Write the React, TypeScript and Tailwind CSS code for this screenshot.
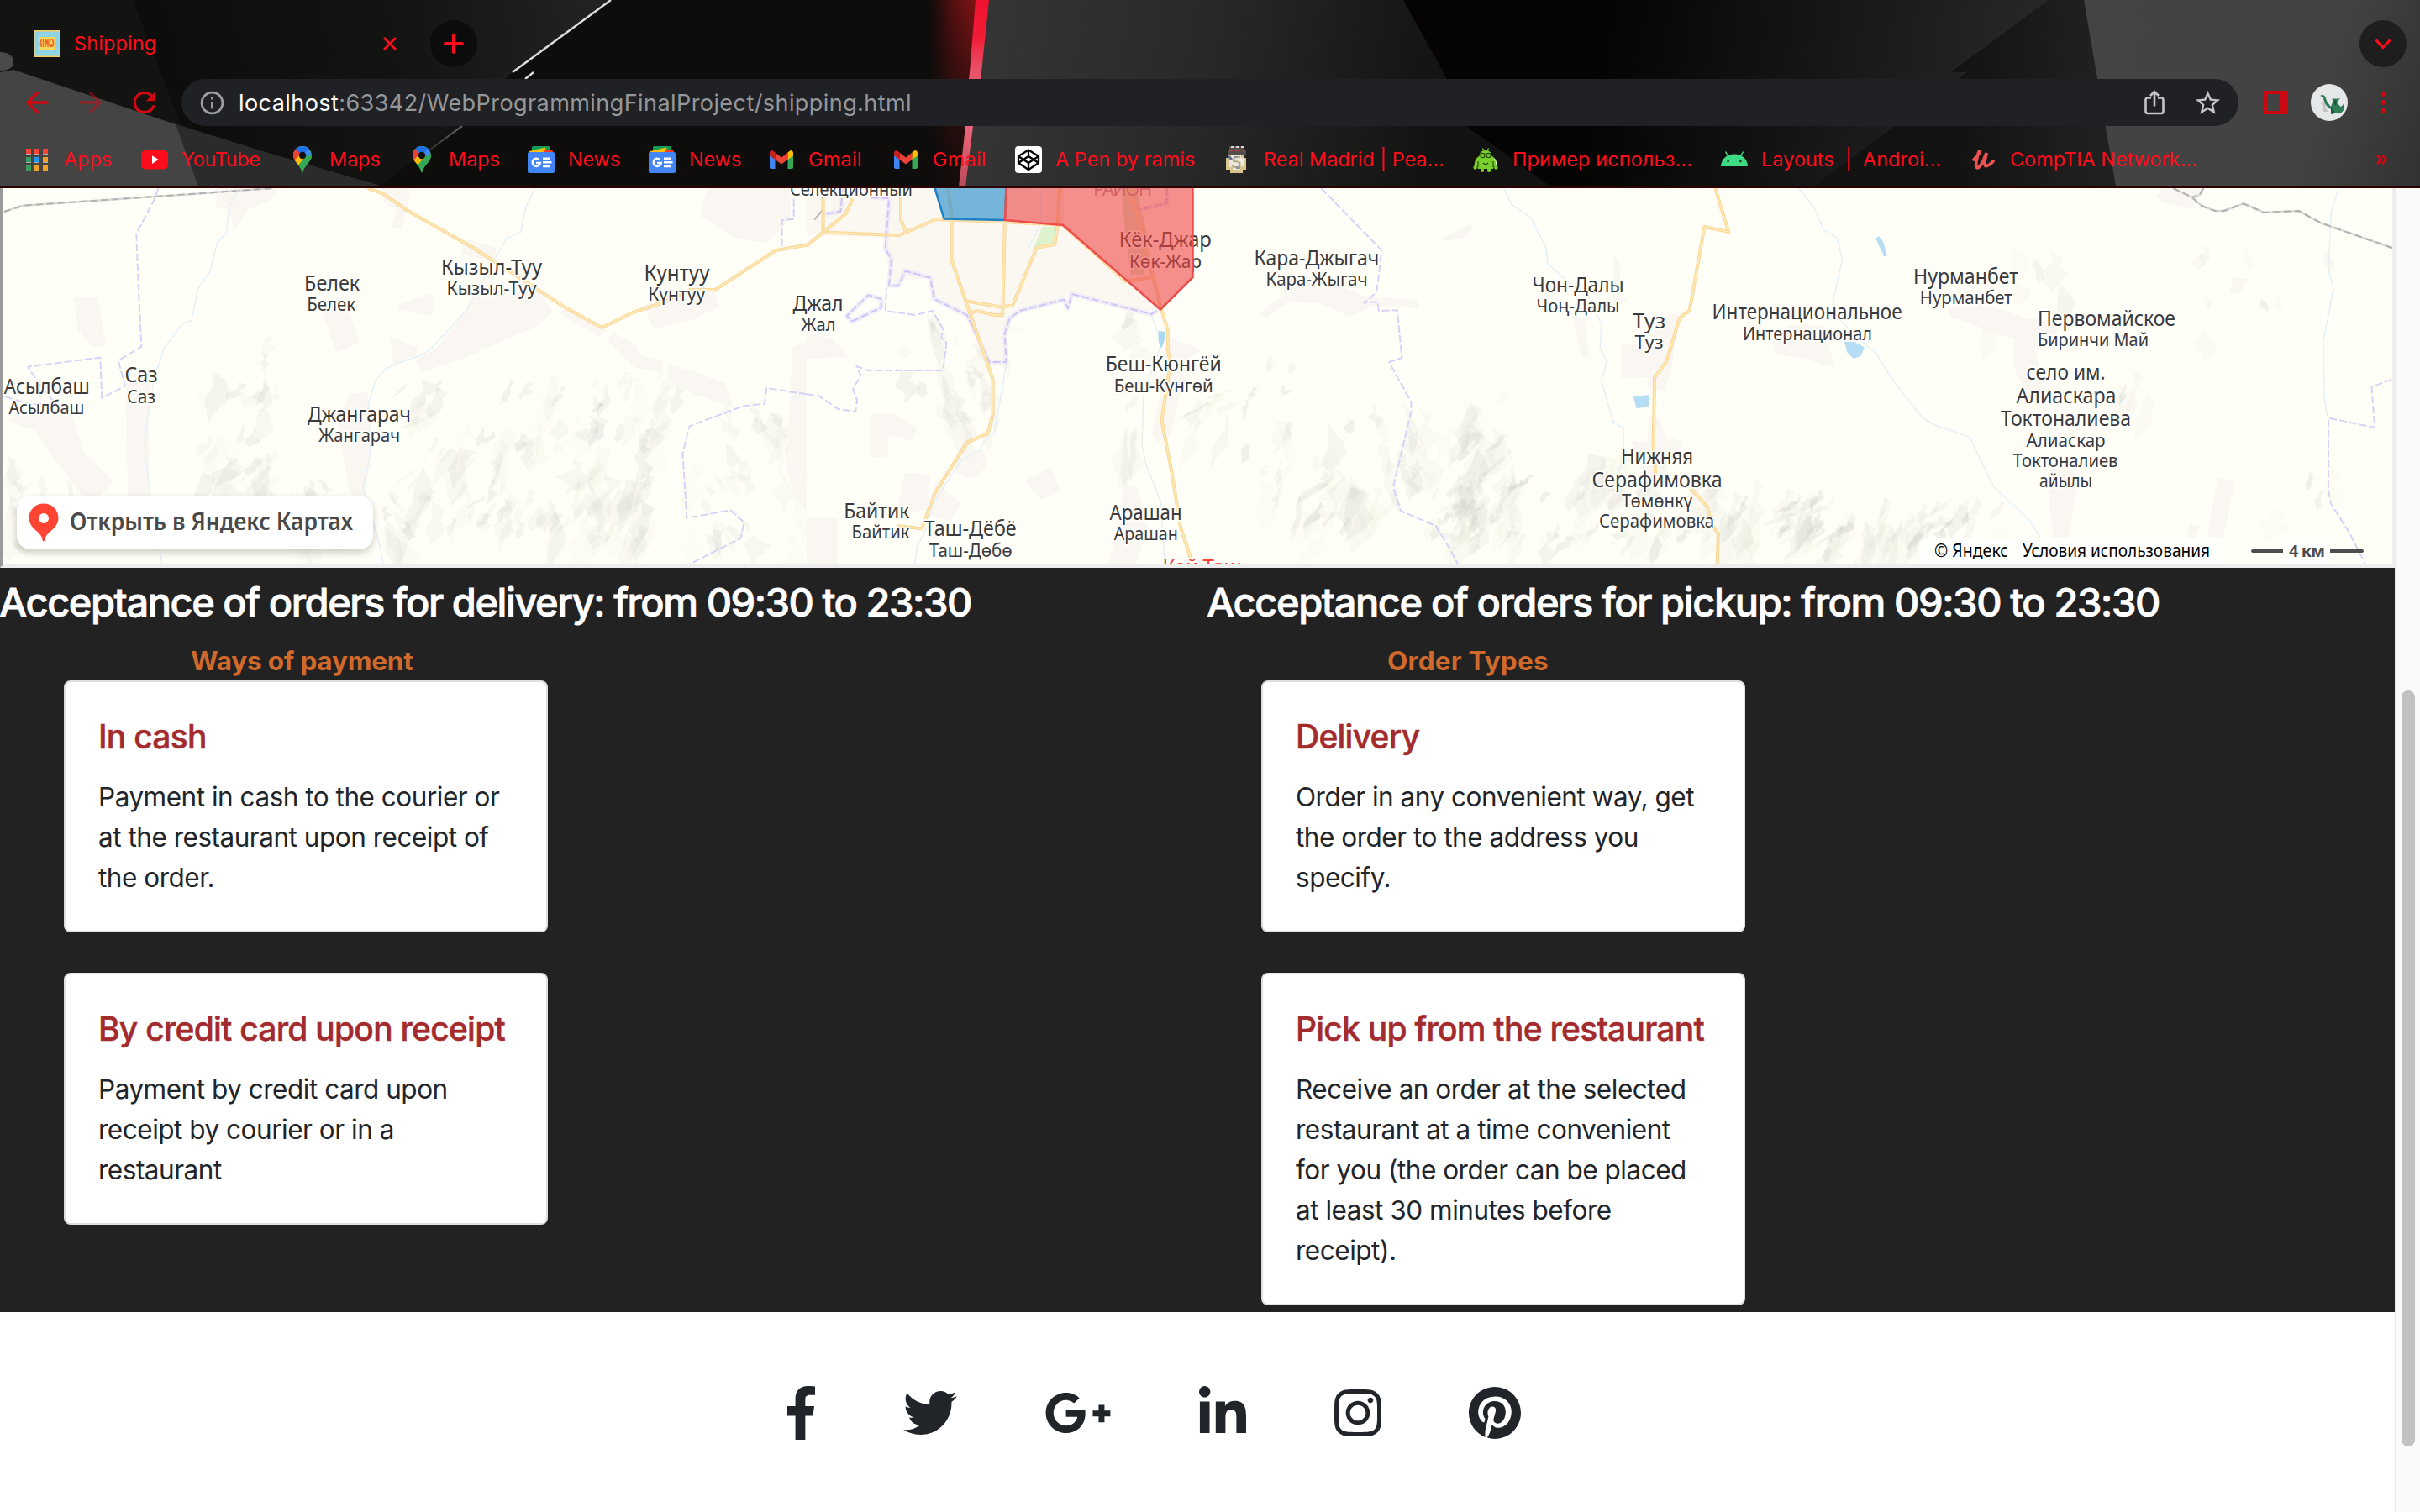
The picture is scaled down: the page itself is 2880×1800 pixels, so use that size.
import type { ReactNode } from "react";
import { FaGooglePlusG, FaInstagram, FaPinterest, FaTwitter } from "react-icons/fa";
import { MdArrowBack, MdArrowForward, MdInfoOutline, MdRefresh, MdStarBorder } from "react-icons/md";

/* ---------- browser theme artwork ---------- */

function ThemeArt() {
  return (
    <svg className="absolute inset-0" width="2880" height="222" viewBox="0 0 2880 222" aria-hidden>
      <defs>
        <linearGradient id="facetA" x1="160" y1="100" x2="700" y2="0" gradientUnits="userSpaceOnUse">
          <stop offset="0" stopColor="#0c0c0b" />
          <stop offset="0.6" stopColor="#141413" />
          <stop offset="1" stopColor="#222222" />
        </linearGradient>
        <linearGradient id="facetB" x1="1160" y1="0" x2="1730" y2="100" gradientUnits="userSpaceOnUse">
          <stop offset="0" stopColor="#363636" />
          <stop offset="0.5" stopColor="#282828" />
          <stop offset="1" stopColor="#121211" />
        </linearGradient>
        <linearGradient id="facetC" x1="1900" y1="40" x2="2420" y2="120" gradientUnits="userSpaceOnUse">
          <stop offset="0" stopColor="#050403" />
          <stop offset="0.5" stopColor="#161616" />
          <stop offset="1" stopColor="#282828" />
        </linearGradient>
        <linearGradient id="facetD" x1="2320" y1="0" x2="2500" y2="0" gradientUnits="userSpaceOnUse">
          <stop offset="0" stopColor="#121212" />
          <stop offset="1" stopColor="#212121" />
        </linearGradient>
        <linearGradient id="facetE" x1="2490" y1="100" x2="2880" y2="222" gradientUnits="userSpaceOnUse">
          <stop offset="0" stopColor="#444444" />
          <stop offset="0.65" stopColor="#424242" />
          <stop offset="1" stopColor="#323232" />
        </linearGradient>
        <linearGradient id="glow" x1="1105" y1="0" x2="1165" y2="0" gradientUnits="userSpaceOnUse">
          <stop offset="0" stopColor="#5a0a0a" stopOpacity="0" />
          <stop offset="0.5" stopColor="#6b1112" stopOpacity="0.8" />
          <stop offset="1" stopColor="#8a1416" />
        </linearGradient>
        <linearGradient id="glowFade" x1="0" y1="0" x2="0" y2="222" gradientUnits="userSpaceOnUse">
          <stop offset="0" stopColor="#fff" />
          <stop offset="0.45" stopColor="#777" />
          <stop offset="1" stopColor="#111" />
        </linearGradient>
        <mask id="glowMask">
          <rect x="1080" width="120" height="222" fill="url(#glowFade)" />
        </mask>
        <linearGradient id="laser" x1="0" y1="0" x2="0" y2="222" gradientUnits="userSpaceOnUse">
          <stop offset="0" stopColor="#f0122e" />
          <stop offset="0.2" stopColor="#f21c38" />
          <stop offset="0.38" stopColor="#e8546a" />
          <stop offset="0.7" stopColor="#ea6478" />
          <stop offset="1" stopColor="#bd4a5a" />
        </linearGradient>
        <linearGradient id="beam" x1="550" y1="150" x2="510" y2="180" gradientUnits="userSpaceOnUse">
          <stop offset="0" stopColor="#6e6e6c" />
          <stop offset="1" stopColor="#2a2a2a" />
        </linearGradient>
      </defs>
      <rect width="2880" height="222" fill="#131312" />
      {/* left slabs */}
      <path d="M158 0H727L610 86L455 222H390L215 148Z" fill="url(#facetA)" />
      <path d="M0 62C8 62 16 66 16 72C16 80 12 84 0 84Z" fill="#4a4a4a" />
      <path d="M0 86L16 83L209 148L305 178L455 222H0Z" fill="#444444" />
      <path d="M209 148L305 178L455 222H236Z" fill="#2b2b2b" />
      <path d="M727 0H1170L1146 222H450L550 150L610 86Z" fill="#0e0d0c" />
      <path d="M727 0L610 86" stroke="#dcdcda" strokeWidth="2.5" />
      <path d="M635 86L625 94" stroke="#dcdcda" strokeWidth="2.5" />
      <path d="M550 150L512 178" stroke="url(#beam)" strokeWidth="2" />
      {/* centre slab and laser line */}
      <path d="M1168 0H1670L1718 86L1745 150L1845 222H1146Z" fill="url(#facetB)" />
      <path d="M1105 0H1168L1146 222H1105Z" fill="url(#glow)" mask="url(#glowMask)" />
      <path d="M1161 0H1177L1168 86H1154Z" fill="url(#laser)" />
      <path d="M1154 86H1168L1167 94H1153Z" fill="url(#laser)" />
      <path d="M1149 150H1158L1149 222H1141Z" fill="url(#laser)" />
      {/* right slabs */}
      <path d="M1670 0H1925L1905 222H1845L1745 150L1718 86Z" fill="#050403" />
      <path d="M1910 0H2438L2322 86H2341L2255 150L2158 222H1880Z" fill="url(#facetC)" />
      <path d="M2438 0H2480L2518 222H2158L2255 150L2341 86H2322Z" fill="url(#facetD)" />
      <path d="M2480 0H2880V222H2518Z" fill="url(#facetE)" />
    </svg>
  );
}

/* ---------- bookmark icons ---------- */

const APP_COLORS = ["#f44336", "#f44336", "#f44336", "#3c9a5f", "#2196f3", "#f0a024", "#3c9a5f", "#f0a024", "#f0a024"];

function AppsIcon() {
  return (
    <div className="ml-[3px] grid grid-cols-3 gap-x-1 gap-y-[3px]">
      {APP_COLORS.map((c, i) => (
        <span key={i} className="block h-[7px] w-1.5 border-b border-[#b0b0b0]" style={{ backgroundColor: c }} />
      ))}
    </div>
  );
}

function YouTubeIcon() {
  return (
    <svg width="32" height="32" viewBox="0 0 32 32">
      <rect y="5" width="32" height="22.5" rx="5" fill="#ff0d1c" />
      <path d="M13 11.2L20.6 16.1L13 21Z" fill="#fff" />
    </svg>
  );
}

function MapsIcon() {
  return (
    <svg width="32" height="32" viewBox="0 0 32 32">
      <defs>
        <clipPath id="pinClip">
          <path d="M16 0C10 0 5 4.9 5 11C5 18.5 13.6 22 16 32C18.400 22 27 18.500 27 11C27 4.900 22 0 16 0Z" />
        </clipPath>
      </defs>
      <g clipPath="url(#pinClip)">
        <rect width="32" height="32" fill="#34a853" />
        <path d="M3 -1H30L12 14L3 8Z" fill="#4285f4" />
        <path d="M2 3.500L9 3L16 11L8 20L2 18Z" fill="#ea4335" />
        <path d="M6 17L17 6L20 14L10 24Z" fill="#fbbc04" />
        <path d="M6 2L16 0L24 3L16 11L8.500 3.800Z" fill="#1a73e8" />
        <path d="M24 3L27 11L20 14L16 11Z" fill="#4285f4" />
        <path d="M30 8L20 12L9 25L16 33L30 20Z" fill="#34a853" />
      </g>
      <circle cx="16" cy="11" r="4.200" fill="#101010" />
    </svg>
  );
}

function NewsIcon() {
  return (
    <svg width="32" height="32" viewBox="0 0 32 32">
      <rect x="5" width="22" height="8" rx="1.500" fill="#0f9d58" />
      <path d="M2 6L21 1.500L23 9H2Z" fill="#ffc107" />
      <path d="M20 3.500L30 5.500L29 10H19Z" fill="#ff3d22" />
      <rect y="7" width="32" height="25" rx="2" fill="#4285f4" />
      <path d="M13.500 16A4.600 4.600 0 1 0 14.800 20H10" fill="none" stroke="#fff" strokeWidth="2.500" />
      <path d="M18 14.700H27M18 19.300H28.500M18 23.900H27" stroke="#fff" strokeWidth="2.500" />
    </svg>
  );
}

function GmailIcon() {
  return (
    <svg width="32" height="32" viewBox="0 0 32 32">
      <path d="M2 10V25Q2 27 4 27H8.500V14Z" fill="#4285f4" />
      <path d="M30 10V25Q30 27 28 27H23.500V14Z" fill="#34a853" />
      <path d="M8.500 7.500V16L16 21.500L23.500 16V7.500L16 13.500Z" fill="#ea4335" />
      <path d="M2 8.500Q2 5 5 5Q6 5 8.500 7.500V16L2 11.500Z" fill="#c5221f" />
      <path d="M30 8.500Q30 5 27 5Q26 5 23.500 7.500V16L30 11.500Z" fill="#fbbc04" />
    </svg>
  );
}

function PenIcon() {
  return (
    <svg width="32" height="32" viewBox="0 0 32 32">
      <rect width="32" height="32" rx="4" fill="#fff" />
      <g fill="none" stroke="#000" strokeWidth="2.300" strokeLinejoin="round">
        <path d="M16 4.500L28 12V20L16 28L4 20V12Z" />
        <path d="M4 12L16 20L28 12M4 20L16 12L28 20M16 4.500V12M16 20V28" />
      </g>
    </svg>
  );
}

function CrestIcon() {
  return (
    <svg width="32" height="32" viewBox="0 0 32 32">
      <path d="M7 0H25V4H27V10H5V4H7Z" fill="#55504e" />
      <path d="M9 0H12V2H9ZM15 0H18V2H15ZM21 0H24V2H21Z" fill="#d8d8d8" />
      <path d="M8 4H11V6H8ZM14 4H18V6H14ZM21 4H24V6H21Z" fill="#c03a34" />
      <path d="M5 10H25V14H27V28H23V32H8V28H3V14H5Z" fill="#d9c48e" />
      <path d="M9 11H21V14H24V24H20V28H11V25H7V15H9Z" fill="#ece8dc" />
      <path d="M6 12L10 16" stroke="#5d6c92" strokeWidth="3" fill="none" />
      <path d="M20 13Q11 12 12 18Q22 18 19 24Q14 27 10 23" stroke="#b3a67e" strokeWidth="2" fill="none" />
      <path d="M12 12H17V14H12ZM15 24H20V27H15Z" fill="#8f939c" />
    </svg>
  );
}

function DroidMascotIcon() {
  return (
    <svg width="32" height="32" viewBox="0 0 32 32">
      <g fill="#79d02b">
        <path d="M16 5C11 5 8.500 8.500 8.500 12C4 14 3 18 2.500 24H6L7 27H25L26 24H29.500C29 18 28 14 23.500 12C23.500 8.500 21 5 16 5Z" />
        <circle cx="3.600" cy="25.500" r="2.200" />
        <circle cx="28.400" cy="25.500" r="2.200" />
        <rect x="10" y="26" width="4" height="5" rx="2" />
        <rect x="18" y="26" width="4" height="5" rx="2" />
      </g>
      <path d="M12.500 2.500L14 6M19.500 2.500L18 6" stroke="#79d02b" strokeWidth="1.300" />
      <g fill="none" stroke="#234d0b" strokeWidth="1.200">
        <circle cx="12.500" cy="11" r="2.600" />
        <circle cx="19.500" cy="11" r="2.600" />
        <path d="M13 20Q16 23.500 19 20M7 18V25M25 18V25" />
      </g>
      <path d="M26.500 15Q29 18 29 23" stroke="#e8f3de" fill="none" />
    </svg>
  );
}

function AndroidIcon() {
  return (
    <svg width="32" height="32" viewBox="0 0 32 32">
      <path d="M0 24C0.500 15 7 9.500 16 9.500S31.500 15 32 24Z" fill="#3ddc84" />
      <path d="M8.500 12L5.500 6.500M23.500 12L26.500 6.500" stroke="#3ddc84" strokeWidth="1.500" />
      <circle cx="8.600" cy="18" r="1.300" fill="#14301f" />
      <circle cx="23.400" cy="18" r="1.300" fill="#14301f" />
    </svg>
  );
}

function UdemyIcon() {
  return (
    <svg width="32" height="32" viewBox="0 0 32 32">
      <path
        d="M5 16Q11 10 12 7Q12 4.500 10.500 8Q6.500 21 8 25Q11 28 16.500 17L19.500 9.500M20 9.500Q16 23 19.500 23.500Q23 23.500 28 18"
        fill="none"
        stroke="#ec5252"
        strokeWidth="3.800"
        strokeLinecap="round"
        strokeLinejoin="round"
      />
    </svg>
  );
}

const BOOKMARKS: { label: string; w: string; tracking: string; icon: ReactNode }[] = [
  { label: "Apps", w: "w-[140px]", tracking: "tracking-[-0.1px]", icon: <AppsIcon /> },
  { label: "YouTube", w: "w-[176px]", tracking: "tracking-[-0.4px]", icon: <YouTubeIcon /> },
  { label: "Maps", w: "w-[142px]", tracking: "tracking-[-0.1px]", icon: <MapsIcon /> },
  { label: "Maps", w: "w-[142px]", tracking: "tracking-[-0.1px]", icon: <MapsIcon /> },
  { label: "News", w: "w-[144px]", tracking: "tracking-[-0.1px]", icon: <NewsIcon /> },
  { label: "News", w: "w-[142px]", tracking: "tracking-[-0.1px]", icon: <NewsIcon /> },
  { label: "Gmail", w: "w-[148px]", tracking: "tracking-[0.2px]", icon: <GmailIcon /> },
  { label: "Gmail", w: "w-[146px]", tracking: "tracking-[0.2px]", icon: <GmailIcon /> },
  { label: "A Pen by ramis", w: "w-[248px]", tracking: "tracking-[0px]", icon: <PenIcon /> },
  { label: "Real Madrid | Pea...", w: "w-[296px]", tracking: "tracking-[-0.05px]", icon: <CrestIcon /> },
  { label: "Пример использ...", w: "w-[296px]", tracking: "tracking-[0.1px]", icon: <DroidMascotIcon /> },
  { label: "Layouts  |  Androi...", w: "w-[296px]", tracking: "tracking-[0px]", icon: <AndroidIcon /> },
  { label: "CompTIA Network...", w: "w-[484px]", tracking: "tracking-[-0.05px]", icon: <UdemyIcon /> },
];

/* ---------- browser chrome ---------- */

function Favicon() {
  return (
    <svg width="32" height="32" viewBox="0 0 32 32">
      <rect width="32" height="32" fill="#f6cf62" />
      <rect x="1.500" y="1.500" width="29" height="29" fill="#8fd3e4" />
      <rect x="7" y="8" width="18" height="15.500" fill="#fbd65c" />
      <g fill="none" stroke="#ee6a2c" strokeWidth="1.600">
        <path d="M9.500 11Q7.500 15.500 9.500 20M11.500 11V20M14 20V11L15.500 15L17 11V20M21 12Q19 10.500 19 15.500T21 19V16M22.500 11Q24.500 15.500 22.500 20" />
      </g>
    </svg>
  );
}

function BrowserChrome() {
  return (
    <header className="relative h-[224px] w-full shrink-0 overflow-hidden border-b-2 border-[#2b0000] bg-[#121211]">
      <ThemeArt />
      <div className="relative flex h-[222px] flex-col">
        <div className="flex h-[86px] items-end justify-between pr-4">
          <div className="flex items-center">
            <div className="ml-4 flex h-[68px] w-[482px] items-center rounded-t-2xl pr-[26px] pl-6">
              <Favicon />
              <span className="ml-4 text-[23.5px] tracking-[0.1px] text-[#ff0d1c]">Shipping</span>
              <svg className="ml-auto" width="16" height="16" viewBox="0 0 16 16" stroke="#ff0d1c" strokeWidth="2.800">
                <path d="M1 1L15 15M15 1L1 15" />
              </svg>
            </div>
            <div className="ml-[14px] flex size-14 items-center justify-center rounded-full bg-[#0c0c0c]">
              <svg width="24" height="24" viewBox="0 0 24 24" stroke="#ff0d1c" strokeWidth="4" strokeLinecap="round">
                <path d="M12 2V22M2 12H22" />
              </svg>
            </div>
          </div>
          <div className="mb-1.5 flex size-14 items-center justify-center rounded-full bg-[#1e1e1e]">
            <svg width="20" height="14" viewBox="0 0 20 14" fill="none" stroke="#ff0d1c" strokeWidth="3.200">
              <path d="M1.500 2.500L10 11.500L18.500 2.500" />
            </svg>
          </div>
        </div>

        <div className="flex h-[72px] items-center">
          <div className="flex w-[216px] items-center text-[#cf0812]">
            <MdArrowBack className="ml-6 size-10" />
            <MdArrowForward className="ml-6 size-10 opacity-50" />
            <MdRefresh className="ml-6 size-10" />
          </div>
          <div className="flex h-14 w-[2448px] items-center rounded-full bg-[#202124] pl-5">
            <MdInfoOutline className="size-[33px] text-[#9aa0a6]" />
            <div className="ml-[15px] pt-0.5 text-[27px] tracking-[0.43px] text-[#95979a]">
              <span className="text-white">localhost</span>:63342/WebProgrammingFinalProject/shipping.html
            </div>
            <svg className="ml-auto" width="24" height="30" viewBox="0 0 24 30" fill="none" stroke="#c4c5c7" strokeWidth="2.600">
              <path d="M8 9.500H4Q1.500 9.500 1.500 12V25.500Q1.500 28 4 28H20Q22.500 28 22.500 25.500V12Q22.500 9.500 20 9.500H16" />
              <path d="M12 19.500V2.500M7 7L12 2L17 7" />
            </svg>
            <MdStarBorder className="mr-[19px] ml-[34px] size-[35px] text-[#c4c5c7]" />
          </div>
          <div className="ml-[30px] h-7 w-7 border-4 border-r-[10px] border-[#cc0812]" />
          <div className="ml-7 flex size-11 items-center justify-center rounded-full bg-[#e6e7e8]">
            <svg width="44" height="44" viewBox="0 0 44 44">
              <path d="M12 23Q18 20 18 29L21 33H14Q16 27 12 23Z" fill="#c2c5c6" />
              <path d="M11 14Q16 11 18 17Q19 22 22 24.500L24 27L25.500 23Q26.500 19 25.500 17.500H35.500Q31 20 31.500 23Q34 25 35.500 27Q38.500 26 39.500 22Q41 31 36.500 34Q33 36.500 30 34L25 36.500L27 31L22 29Q16 24 15.500 19Q15 15 11 14Z" fill="#2f7d57" />
              <path d="M27 18.500L31 20L30 26L28 24ZM24 26L29 34L24 36Z" fill="#1d5a3c" />
            </svg>
          </div>
          <div className="ml-[39px] flex flex-col gap-1">
            <span className="size-1.5 rounded-full bg-[#cc0812]" />
            <span className="size-1.5 rounded-full bg-[#cc0812]" />
            <span className="size-1.5 rounded-full bg-[#cc0812]" />
          </div>
        </div>

        <div className="flex h-16 items-center pl-7">
          {BOOKMARKS.map((b, i) => (
            <div key={i} className={`flex shrink-0 items-center ${b.w}`}>
              <span className="flex w-8 shrink-0">{b.icon}</span>
              <span className={`ml-4 text-[23.5px] whitespace-pre text-[#ff0d1c] ${b.tracking}`}>{b.label}</span>
            </div>
          ))}
          <svg width="14" height="14" viewBox="0 0 14 14" fill="none" stroke="#cf0812" strokeWidth="2.600">
            <path d="M1 2L6 7L1 12M7 2L12 7L7 12" />
          </svg>
        </div>
      </div>
    </header>
  );
}

/* ---------- map ---------- */

type Label = [text: string, x: number, y: number, width: number, major: boolean];

const LABELS: Label[] = [
  ["Белек", 395.1, 345.7, 66, true],
  ["Белек", 394.2, 370, 58, false],
  ["Кызыл-Туу", 585, 326.7, 120, true],
  ["Кызыл-Туу", 585, 350.7, 107, false],
  ["Кунтуу", 805.5, 334, 78, true],
  ["Күнтуу", 805.2, 358, 68, false],
  ["Асылбаш", 55.7, 469, 102, true],
  ["Асылбаш", 55.4, 493, 90, false],
  ["Саз", 168, 455, 39, true],
  ["Саз", 168, 480, 34, false],
  ["Джангарач", 427.5, 502, 123, true],
  ["Жангарач", 427.7, 526, 97, false],
  ["Селекционный", 1013, 232.7, 146, false],
  ["Кёк-Джар", 1386.8, 294, 110, true],
  ["Көк-Жар", 1387, 319, 86, false],
  ["Беш-Кюнгёй", 1384.7, 442, 138, true],
  ["Беш-Күнгөй", 1384.7, 466.7, 118, false],
  ["Кара-Джыгач", 1566.9, 316, 149, true],
  ["Кара-Жыгач", 1567, 340, 121, false],
  ["Джал", 973.5, 369.7, 60, true],
  ["Жал", 974, 394, 41, false],
  ["Байтик", 1043.3, 616.7, 78, true],
  ["Байтик", 1048, 641, 69, false],
  ["Таш-Дёбё", 1154.7, 638, 110, true],
  ["Таш-Дөбө", 1155.3, 662.7, 99, false],
  ["Арашан", 1363.6, 619, 86, true],
  ["Арашан", 1363.8, 643, 76, false],
  ["Чон-Далы", 1878, 347.7, 109, true],
  ["Чоң-Далы", 1878, 372, 99, false],
  ["Туз", 1962.6, 390.7, 39, true],
  ["Туз", 1962.6, 415, 34, false],
  ["Интернациональное", 2150.6, 380, 226, true],
  ["Интернационал", 2151, 405, 154, false],
  ["Нурманбет", 2339.5, 337.7, 125, true],
  ["Нурманбет", 2339.8, 362, 110, false],
  ["Первомайское", 2507, 387.7, 164, true],
  ["Биринчи Май", 2491, 412, 132, false],
  ["село им.", 2458.6, 452, 94, true],
  ["Алиаскара", 2459, 480, 119, true],
  ["Токтоналиева", 2458.6, 507, 155, true],
  ["Алиаскар", 2458.6, 532, 94, false],
  ["Токтоналиев", 2458, 556, 125, false],
  ["айылы", 2458.6, 580, 63, false],
  ["Нижняя", 1972, 552, 86, true],
  ["Серафимовка", 1972, 580, 155, true],
  ["Төмөнкү", 1972, 604, 84, false],
  ["Серафимовка", 1971.5, 628, 137, false],
];

/* Relief bands: left, top, right, bottom, number of ridges, lean of the slope */
const RELIEF: [number, number, number, number, number, number][] = [
  [4, 540, 90, 640, 14, 10],
  [230, 440, 330, 590, 22, -12],
  [310, 380, 330, 500, 6, -4],
  [330, 560, 480, 640, 20, 12],
  [480, 450, 590, 620, 36, -14],
  [590, 440, 720, 620, 44, -8],
  [700, 440, 830, 640, 40, -8],
  [830, 470, 960, 640, 30, 12],
  [1060, 370, 1200, 500, 20, 10],
  [1120, 430, 1180, 510, 14, 8],
  [1335, 370, 1360, 520, 8, -6],
  [1410, 460, 1470, 500, 8, -26],
  [1480, 420, 1540, 580, 18, -4],
  [1540, 560, 1620, 620, 14, -20],
  [1560, 460, 1700, 600, 26, 6],
  [1720, 460, 1800, 600, 32, -14],
  [1700, 560, 1900, 640, 50, -14],
  [1880, 520, 1990, 640, 22, -10],
  [2000, 560, 2110, 640, 26, -8],
  [2120, 580, 2200, 640, 36, -20],
  [2200, 590, 2290, 640, 22, -10],
  [2290, 590, 2380, 630, 14, -14],
  [2290, 290, 2460, 380, 8, 6],
  [2590, 290, 2800, 380, 8, 4],
  [2520, 420, 2560, 470, 6, -12],
  [2680, 550, 2840, 620, 4, -4],
];

function seeded(seed: number) {
  let s = seed;
  return () => {
    s = (s * 1664525 + 1013904223) % 4294967296;
    return s / 4294967296;
  };
}

function buildRelief() {
  const rnd = seeded(71);
  const out: { d: string; fill: string; opacity: number }[] = [];
  for (const [x0, y0, x1, y1, n, lean] of RELIEF) {
    for (let i = 0; i < n; i++) {
      const x = x0 + rnd() * (x1 - x0);
      const y = y0 + rnd() * (y1 - y0);
      const big = rnd() > 0.55;
      const h = (big ? 34 : 14) + rnd() * (big ? 44 : 20);
      const w = (big ? 12 : 6) + rnd() * (big ? 18 : 9);
      const l = lean * (0.2 + rnd() * 1.3);
      const j = () => (rnd() - 0.5) * w * 0.7;
      out.push({
        d: `M${x} ${y}L${x + w * 0.5 + j()} ${y + h * 0.12}L${x + w * 0.5 + l * 0.3 + j()} ${y + h * 0.35}L${x + w * 0.8 + l * 0.6 + j()} ${y + h * 0.55}L${x + w * 0.4 + l + j()} ${y + h * 0.8}L${x + l} ${y + h}L${x - w * 0.1 + l * 0.8 + j()} ${y + h * 0.75}L${x - w * 0.3 + l * 0.5 + j()} ${y + h * 0.5}L${x + l * 0.2 + j()} ${y + h * 0.28}Z`,
        fill: rnd() > 0.45 ? "#8c9090" : "#c9c8b4",
        opacity: (big ? 0.04 : 0.06) + rnd() * (big ? 0.05 : 0.07),
      });
    }
  }
  return out;
}

const RIDGES = buildRelief();

/* Each third of the map is drawn in its own grid of 1568 x 1410 cells over 960 x 470 px. */
function Tile({ x, children }: { x: number; children: ReactNode }) {
  return <g transform={`translate(${x} 220) scale(0.61225 0.33333)`}>{children}</g>;
}

function Area({ d, fill = "#faf6f2" }: { d: string; fill?: string }) {
  return <path d={d} fill={fill} />;
}

function Line({ d, color, w, dash, opacity }: { d: string; color: string; w: number; dash?: string; opacity?: number }) {
  return (
    <path d={d} fill="none" stroke={color} strokeWidth={w} strokeDasharray={dash} opacity={opacity} strokeLinejoin="round" vectorEffect="non-scaling-stroke" />
  );
}

const Road = ({ d, w = 4 }: { d: string; w?: number }) => (
  <>
    <Line d={d} color="#f9d796" w={w} />
    <Line d={d} color="#ffe7b4" w={w - 2} />
  </>
);
const River = ({ d }: { d: string }) => <Line d={d} color="#e3f1f7" w={1.5} />;
const Border = ({ d }: { d: string }) => <Line d={d} color="#d8d1f8" w={2} dash="9 3" />;
const CityBorder = ({ d }: { d: string }) => (
  <>
    <Line d={d} color="#ece6fa" w={6} opacity={0.6} />
    <Line d={d} color="#cfc6f6" w={2} dash="9 3" />
  </>
);
const Rail = ({ d }: { d: string }) => (
  <>
    <Line d={d} color="#d8d8d6" w={2.5} />
    <Line d={d} color="#b2b2b2" w={2} dash="8 5" />
  </>
);

function MapCanvas() {
  return (
    <svg className="block" width="2843" height="448" viewBox="4 224 2843 448">
      <rect x="4" y="224" width="2843" height="448" fill="#fffff7" />

      <g>
        {RIDGES.map((r, i) => (
          <path key={i} d={r.d} fill={r.fill} opacity={r.opacity} />
        ))}
      </g>

      <Tile x={0}>
        <Area d="M143 400L190 402L206 575L178 578L152 520Z" />
        <Area d="M420 12H545L520 60L480 90L455 165L445 90L420 80Z" />
        <Area d="M742 12H795V60L780 160L760 150L770 90L745 60Z" />
        <Area d="M625 450L680 460L698 565L655 600Z" />
        <Area d="M775 430L830 390L845 410L838 468L775 445Z" />
        <Area d="M757 543L812 580L808 610L765 638Z" />
        <Area d="M905 192L965 225L960 280L895 245Z" />
        <Area d="M925 330L985 390L1050 370L1030 470L990 545L900 620L822 668L805 630L850 580L905 450L920 400Z" />
        <Area d="M960 570L990 470L1045 380L1075 450L1040 510Z" />
        <Area d="M1100 435L1180 520L1165 545L1090 460Z" />
        <Area d="M1190 525L1235 570L1245 610L1290 630L1285 670L1235 655L1180 555Z" />
        <Area d="M1300 645L1350 665L1410 710L1425 795L1360 755L1295 700Z" />
        <Area d="M1250 430L1390 380L1398 435L1350 480L1270 515Z" />
        <Area d="M1375 12H1537V120L1490 210L1430 190L1360 110Z" />
        <Area d="M10 840L90 800L140 830L165 960L220 1060L195 1110H160L110 990L70 880Z" />
        <Area d="M245 700L290 690L290 1110H248Z" />
        <Area d="M680 745L715 742L720 1000L705 1120L680 1100L655 850Z" />
        <Area d="M1540 580L1568 560V1170L1540 1100L1530 1000Z" />
        <Rail d="M8 96L45 74L380 32L530 12" />
        <River d="M462 20L445 80L440 170L422 210L408 310L385 370L372 485L355 495L320 580L300 690L285 850L282 960L292 1110L315 1355" />
        <River d="M1040 12L1022 80L1012 170L985 190L960 270L905 450L880 500L838 585L820 608L770 638L748 660L730 700L716 780L720 960L706 1080L740 1300L745 1355" />
        <Border d="M308 12L298 60L265 175L270 400L275 578L230 628L243 718L198 762L195 617L54 650L75 710L105 775L60 785L8 755" />
        <Border d="M1568 748L1490 726L1486 782L1445 790L1340 862L1327 960L1335 1190L1420 1162L1446 1205L1440 1262L1340 1355" />
        <Border d="M1543 50V122L1520 126V225" />
        <Road d="M715 12L745 32L790 90L920 225L1100 440L1170 510L1230 456L1290 420L1340 375L1391 374L1508 234L1568 215" />
      </Tile>

      <Tile x={960}>
        <Area d="M0 12H500L500 150L620 345L690 445L650 450L515 395L395 470L385 630H350L310 470L250 410L240 330L160 350L155 190L0 180Z" fill="#fbf7f1" />
        <Area d="M458 150H490L486 210L450 220L438 240Z" fill="#dcf3cd" />
        <Area d="M0 530L50 550L82 615L0 620Z" />
        <Area d="M125 820L170 815L215 870L205 915L160 890L158 970L125 975Z" />
        <Area d="M425 1055L475 1010L495 1095L455 1125Z" />
        <Area d="M290 975L345 945L350 1010L320 1050L290 1030Z" />
        <Area d="M190 1030L240 1035L235 1160L175 1175Z" />
        <Area d="M250 1060L300 1140L280 1200L235 1180Z" />
        <Area d="M0 1190H60V1355H0Z" />
        <Area d="M615 1070L640 1075L665 1200L640 1355H585L610 1200Z" />
        <Area d="M700 540L770 590L720 640L735 690L705 900L680 920L670 890L690 720Z" />
        <Area d="M915 350L970 320L1090 400L1185 410L1190 440L1100 435L1055 470L1000 425L940 415L895 475L880 460L930 390Z" />
        <Area d="M1230 195L1290 140L1295 155L1280 190L1240 200Z" />
        <Area d="M1487 465L1510 470L1522 610L1508 620Z" />
        <Area d="M612 12H640L665 200L655 320H630L618 150Z" fill="#d8ecc8" />
        <Line d="M31 12V90L15 125" color="#b9b9b9" w={2} />
        <River d="M455 15V140L430 230" />
        <River d="M388 635L380 730L370 830L365 885L350 905L335 950L300 985L270 1070L245 1140L235 1220L215 1290L210 1355" />
        <River d="M670 465L690 570L655 740L652 930L660 1000L688 1130L690 1180L696 1355" />
        <River d="M1355 12L1370 70L1408 118L1438 230L1440 280L1475 340L1522 400L1545 500L1542 580L1555 630L1545 700L1568 850" />
        <Border d="M1000 12L1117 233L1112 330L1107 385L1083 422L1110 418L1112 450L1148 448L1157 618L1132 633L1175 775V810L1140 1080L1155 1165L1223 1218L1250 1300L1266 1355" />
        <Border d="M0 748L25 755L60 800L95 810L98 770L90 730L105 680L97 648L120 663H265L272 565L262 545L265 515L245 450L210 465L153 450L155 370" />
        <CityBorder d="M125 46L160 48L153 230L165 265L160 360L178 360L192 308L240 332L248 408L312 466L355 633H388L385 530L395 475L415 450L500 410L508 442L515 390L670 462L690 440" />
        <CityBorder d="M88 488L145 438V408L120 394L78 468Z" />
        <CityBorder d="M70 12L66 95L35 105" />
        <CityBorder d="M700 12V65L645 90" />
        <Road d="M32 50V170L180 180L252 123L380 132L498 143L620 345L670 330" />
        <Road d="M90 50L75 105L32 170L0 218" />
        <Road d="M183 45V125L192 165" />
        <Road d="M492 12L488 140" />
        <Road d="M275 12L282 120V270L310 420L362 695V820L352 888L312 920L248 1105L224 1228L175 1218" />
        <Road d="M385 140L381 465H365L330 450L318 460M310 415L375 436L400 432L447 225L482 212L488 145" />
        <Road d="M625 12L637 70L672 320L690 450L702 520V590L707 640L690 840L710 1030L727 1225L746 1330" />
        <Area d="M684 522L697 524L695 560L689 585L684 560Z" fill="#aad9f2" />
      </Tile>

      <Tile x={1920}>
        <Area d="M0 250L12 280L15 400L30 410L0 430Z" />
        <Area d="M15 575L75 560L85 480L125 455L115 640L100 735L65 720L70 690H15Z" />
        <Area d="M35 915L65 920L70 830L90 835L108 920L95 950L85 1080L60 1060Z" />
        <Area d="M315 560L340 500L405 500L432 655L380 625L312 602Z" />
        <Area d="M650 435L735 435L800 475L865 490L860 535L820 570L835 735H800L780 660L778 550L730 525L690 490L652 470Z" />
        <Area d="M1065 12H1148L1125 85L1070 65L1055 40Z" />
        <Area d="M1205 330L1235 335L1215 392L1198 380Z" />
        <Area d="M1175 1045L1208 1065L1185 1262L1155 1255Z" />
        <Area d="M850 1010L905 1030L885 1260H855L845 1100Z" />
        <Area d="M1120 1210L1140 1220L1130 1262H1115Z" />
        <Area d="M510 192L516 183L525 205L532 255H526Z" fill="#b5def5" />
        <Area d="M449 560L470 562L488 580L482 610L467 622L455 600Z" fill="#b5def5" />
        <Area d="M39 757L70 750L69 793L45 798Z" fill="#b5def5" />
        <River d="M360 12L390 80L408 160L435 190L445 265L427 420L445 490L490 570L510 600L540 690L600 830L625 858L692 900L740 1080L775 1140L810 1200L830 1260" />
        <River d="M1410 12L1395 100L1390 300L1400 370L1380 560L1382 760L1388 830" />
        <River d="M0 845L20 870V980L8 1030" />
        <Rail d="M1088 12L1125 45L1143 75L1170 93H1187L1225 67L1265 99L1332 93L1375 136L1515 226" />
        <Rail d="M1147 12L1140 35L1125 45" />
        <Border d="M1513 695L1474 722L1480 867L1390 833V1090L1395 1140L1430 1240L1462 1355" />
        <Road d="M198 12L224 168L177 150L148 450L129 475L103 632L80 688L78 930L82 1030M150 1085L183 1150L190 1210L204 1245L202 1355" />
      </Tile>

      {LABELS.map(([text, x, y, width, major], i) => (
        <text
          key={i}
          x={x}
          y={y}
          textAnchor="middle"
          textLength={width}
          lengthAdjust="spacingAndGlyphs"
          fontSize={major ? 24.5 : 22}
          fill="#3a3a3c"
          stroke="#fffffb"
          strokeWidth="3.5"
          strokeLinejoin="round"
          paintOrder="stroke"
        >
          {text}
        </text>
      ))}
      <text x="1336" y="232.700" textAnchor="middle" textLength="70" fontSize="22" fill="#a89a94">
        РАЙОН
      </text>
      <text x="1430.600" y="683" textAnchor="middle" textLength="94" fontSize="24" fill="#f5413c">
        Кой-Таш
      </text>

      {/* delivery zones */}
      <g strokeWidth="2.500" strokeLinejoin="round">
        <path d="M1112 222L1123.500 260.500L1196 262L1197.500 222Z" fill="#1e88cc" fillOpacity="0.6" stroke="#1f7fc4" />
        <path d="M1197.500 222L1196 262L1265 268L1381 368.500L1419.500 330V222Z" fill="#ed4543" fillOpacity="0.6" stroke="#ee4d4b" />
      </g>
    </svg>
  );
}

function MapPanel() {
  return (
    <section className="relative h-[452px] w-[2850px] overflow-hidden border-t-0 border-r-[3px] border-b-4 border-l-4 border-r-[#ededed] border-b-[#ededed] border-l-[#9a9a9a] font-['Noto_Sans',sans-serif]">
      <MapCanvas />
      <div className="absolute top-[366px] left-4 flex h-16 w-[424px] items-center rounded-2xl bg-white shadow-[0_4px_10px_rgba(0,0,0,0.2)]">
        <svg className="ml-3.5" width="36" height="46" viewBox="0 0 36 46">
          <path d="M18 0.500C8 0.500 0.500 8 0.500 17.500C0.500 22.500 2.600 26.500 6 30C10.500 34.300 15.500 37 16.500 43.500Q16.800 45.500 18 45.500Q19.200 45.500 19.500 43.500C20.500 37 25.500 34.300 30 30C33.400 26.500 35.500 22.500 35.500 17.500C35.500 8 28 0.500 18 0.500Z" fill="#ff4433" />
          <circle cx="18" cy="18" r="6" fill="#fff" />
        </svg>
        <svg className="ml-[13px]" width="340" height="40" viewBox="0 0 340 40">
          <text x="0" y="28.500" textLength="337" lengthAdjust="spacingAndGlyphs" fontSize="28" fontWeight="600" fill="#4a4a4a">
            Открыть в Яндекс Картах
          </text>
        </svg>
      </div>
      <div className="absolute top-[416px] left-[2280px] flex h-8 w-[362px] items-center justify-center rounded-t-lg bg-white/90 text-black">
        <svg width="330" height="32" viewBox="0 0 330 32" fontSize="21.500">
          <text x="2" y="22.700" textLength="88" lengthAdjust="spacingAndGlyphs">© Яндекс</text>
          <text x="107" y="22.700" textLength="223" lengthAdjust="spacingAndGlyphs">Условия использования</text>
        </svg>
      </div>
      <div className="absolute top-[416px] left-[2675px] flex h-8 items-center">
        <span className="block h-1 w-[38px] rounded-l-sm bg-[#4d4d4d]" />
        <span className="flex h-8 w-[56px] items-center justify-center bg-white/90 text-[20px] font-bold tracking-[-0.9px] whitespace-nowrap text-[#4d4d4d]">4 км</span>
        <span className="block h-1 w-10 rounded-r-sm bg-[#4d4d4d]" />
      </div>
    </section>
  );
}

/* ---------- page content ---------- */

function Card({ title, lines, className = "" }: { title: string; lines: string[]; className?: string }) {
  return (
    <article className={`w-[576px] rounded-lg border-2 border-[#dfdfdf] bg-white pt-[41px] pr-10 pb-[39px] pl-[39px] ${className}`}>
      <h5 className="text-[39px] leading-[48px] font-medium tracking-[-0.76px] whitespace-nowrap text-[#a42b2d] [-webkit-text-stroke:0.5px_#a42b2d]">{title}</h5>
      <p className="mt-6 text-[31.5px] leading-[48px] tracking-[-0.48px] whitespace-nowrap text-[#212529]">
        {lines.map((l) => (
          <span key={l} className="block">
            {l}
          </span>
        ))}
      </p>
    </article>
  );
}

function InfoSection() {
  return (
    <section className="h-[886px] w-[2850px] bg-[#222222] pt-3">
      <div className="flex h-[75px] text-[47px] leading-[58px] font-medium whitespace-nowrap text-white [-webkit-text-stroke:0.8px_#fff]">
        <h3 className="-ml-px w-[1437px] tracking-[-1.45px]">Acceptance of orders for delivery: from 09:30 to 23:30</h3>
        <h3 className="tracking-[-1.4px]">Acceptance of orders for pickup: from 09:30 to 23:30</h3>
      </div>
      <div className="flex">
        <div className="w-[1425px] pl-[76px]">
          <p className="h-[47px] pl-[151px] text-[31.5px] leading-[48px] font-bold tracking-[-0.2px] text-[#cf692c]">Ways of payment</p>
          <Card title="In cash" lines={["Payment in cash to the courier or", "at the restaurant upon receipt of", "the order."]} />
          <Card className="mt-12" title="By credit card upon receipt" lines={["Payment by credit card upon", "receipt by courier or in a", "restaurant"]} />
        </div>
        <div className="w-[1425px] pl-[76px]">
          <p className="h-[47px] pl-[150px] text-[31.5px] leading-[48px] font-bold tracking-[0.2px] text-[#cf692c]">Order Types</p>
          <Card title="Delivery" lines={["Order in any convenient way, get", "the order to the address you", "specify."]} />
          <Card
            className="mt-12"
            title="Pick up from the restaurant"
            lines={[
              "Receive an order at the selected",
              "restaurant at a time convenient",
              "for you (the order can be placed",
              "at least 30 minutes before",
              "receipt).",
            ]}
          />
        </div>
      </div>
    </section>
  );
}

function SocialFooter() {
  return (
    <footer className="flex h-[238px] items-start bg-white pt-[88px] pl-[937px] text-[#212529]">
      <svg width="33" height="64" viewBox="0 0 264 512" fill="currentColor">
        <path d="M76.700 512V283H0v-91h76.700v-71.700C76.700 42.400 124.300 0 193.800 0c33.300 0 61.900 2.500 70.200 3.600V85h-48.200c-37.800 0-45.100 18-45.100 44.300V192H256l-11.700 91h-73.600v229" />
      </svg>
      <FaTwitter className="ml-[105px] size-16" />
      <FaGooglePlusG className="ml-[104px] h-16 w-20" />
      <svg className="ml-[104px]" width="56" height="64" viewBox="0 0 448 512" fill="currentColor">
        <path d="M100.280 448H7.400V148.900h92.880zM53.790 108.100C24.090 108.100 0 83.500 0 53.800a53.790 53.790 0 0 1 107.580 0c0 29.700-24.100 54.300-53.790 54.300zM447.900 448h-92.680V302.400c0-34.700-.7-79.200-48.290-79.200-48.290 0-55.690 37.700-55.690 76.700V448h-92.780V148.900h89.080v40.800h1.300c12.400-23.500 42.690-48.300 87.880-48.300 94 0 111.280 61.900 111.280 142.300V448z" />
      </svg>
      <FaInstagram className="ml-[105px] h-16 w-14" />
      <FaPinterest className="ml-[104px] h-16 w-[62px]" />
    </footer>
  );
}

export default function App() {
  return (
    <div className="flex h-[1800px] w-[2880px] flex-col overflow-hidden bg-white font-['Inter',sans-serif]">
      <BrowserChrome />
      <div className="flex flex-1">
        <main className="w-[2850px] shrink-0">
          <MapPanel />
          <InfoSection />
          <SocialFooter />
        </main>
        <aside className="flex w-[30px] justify-center border-l-2 border-[#e8e8ea] bg-[#fafafa] pt-[598px]">
          <div className="h-[900px] w-4 rounded-full bg-[#c1c1c1]" />
        </aside>
      </div>
    </div>
  );
}
